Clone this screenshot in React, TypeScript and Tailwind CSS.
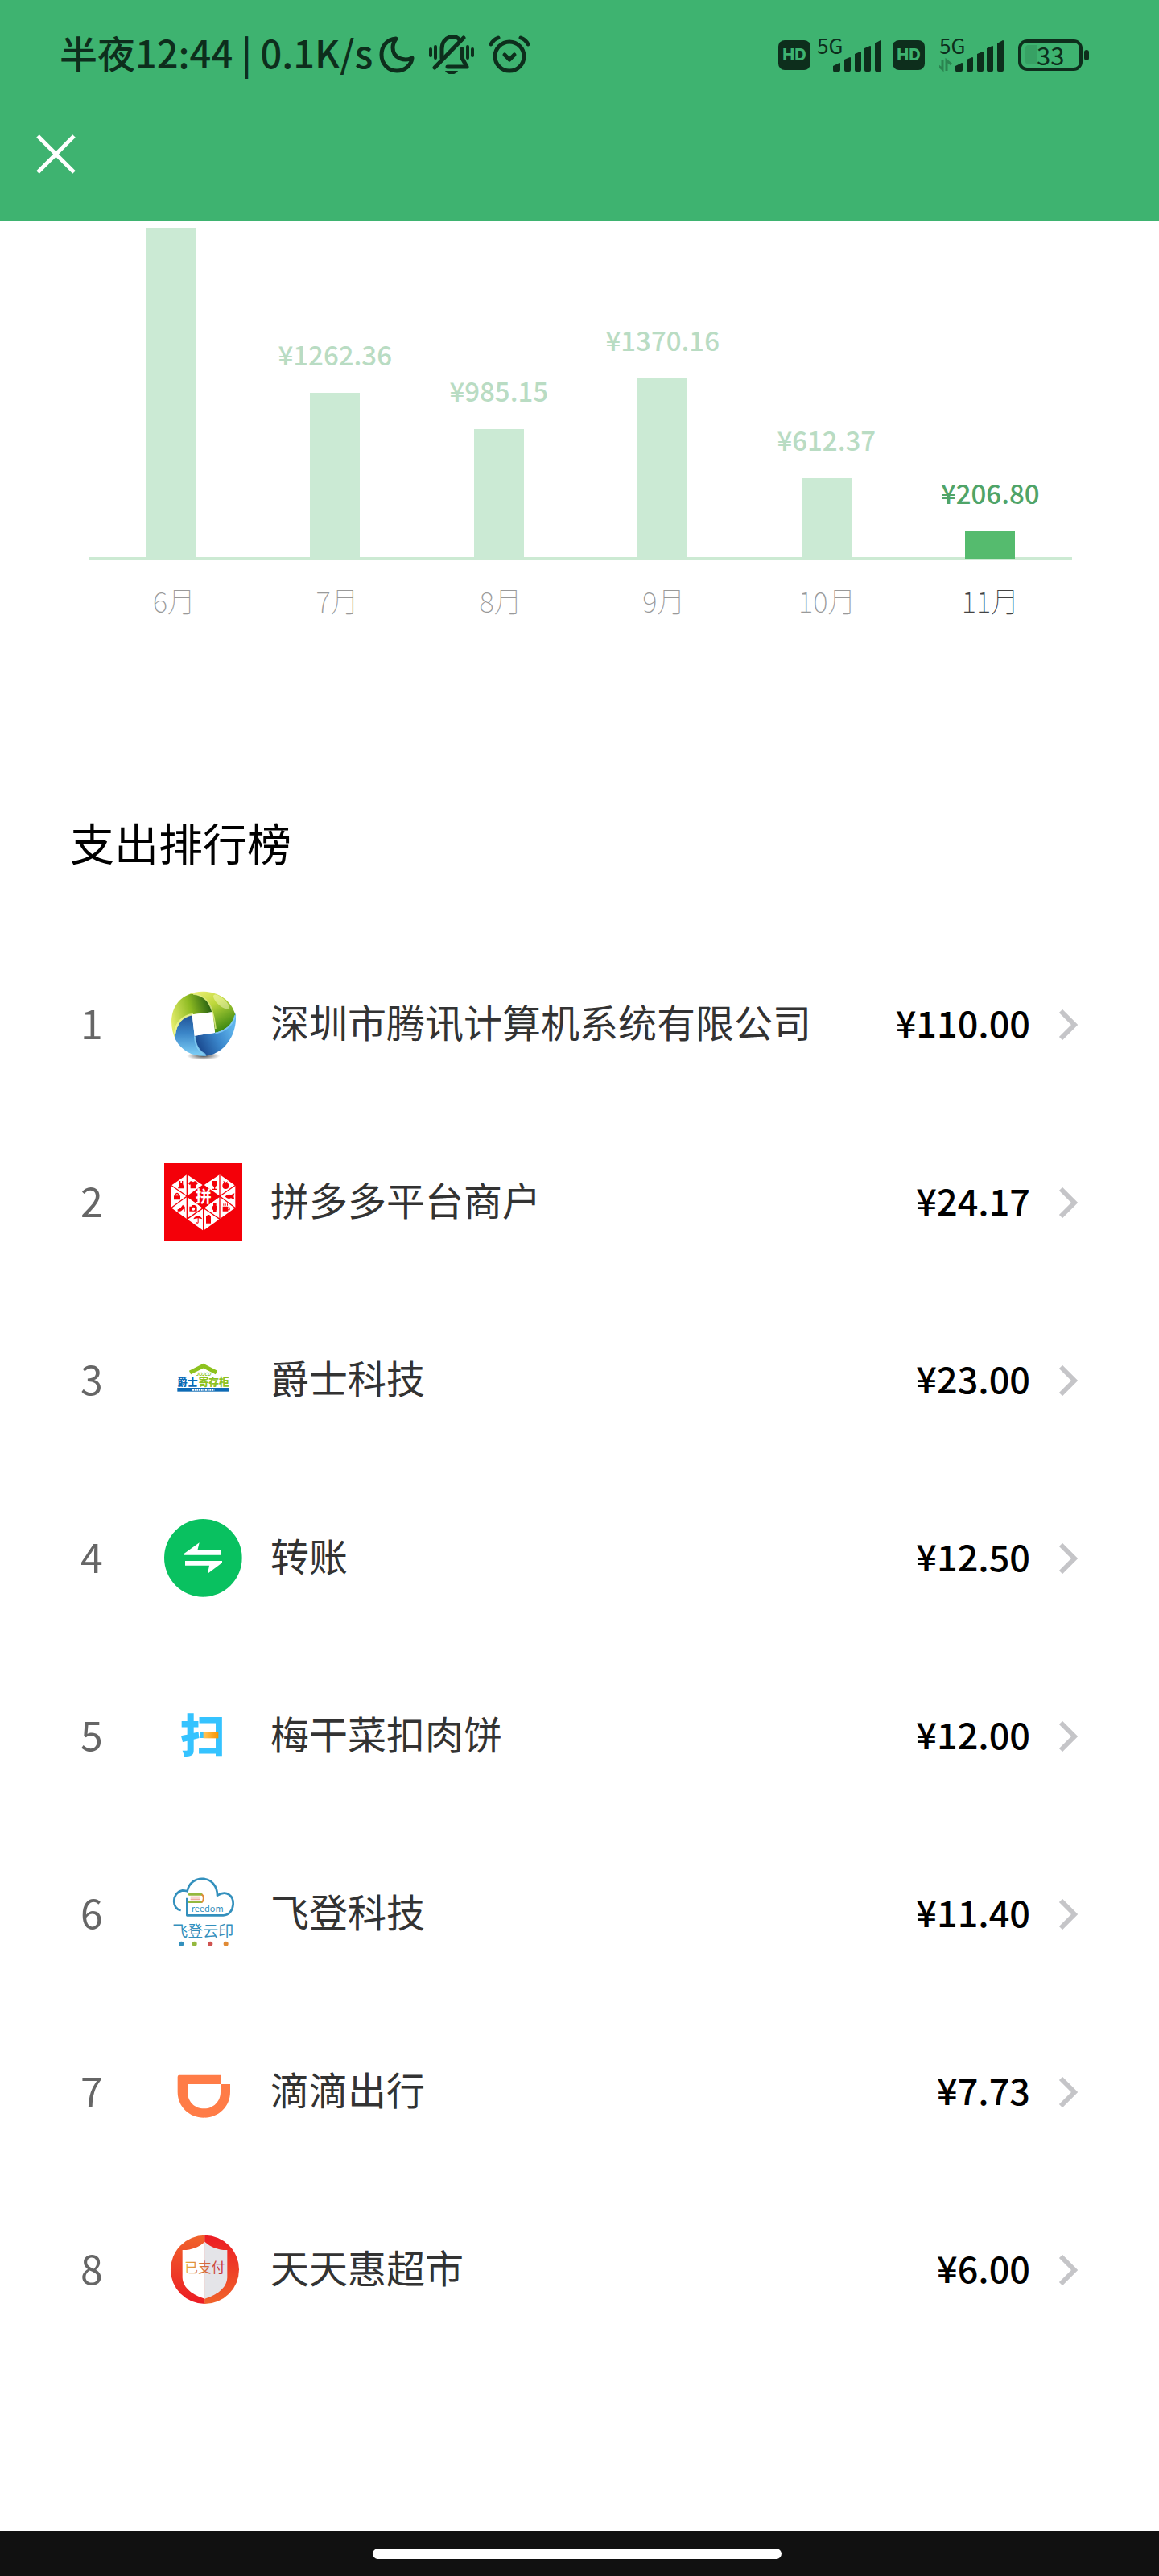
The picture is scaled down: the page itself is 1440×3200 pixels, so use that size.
import React from 'react';

interface MonthBar {
  month: string;
  amount: number;
  label?: string;
  active?: boolean;
}

interface Merchant {
  name: string;
  amount: string;
  Logo: () => React.JSX.Element;
}

const PX_PER_YUAN = 0.1632;

const MONTHS: MonthBar[] = [
  { month: '6月', amount: 2518 },
  { month: '7月', amount: 1262.36, label: '¥1262.36' },
  { month: '8月', amount: 985.15, label: '¥985.15' },
  { month: '9月', amount: 1370.16, label: '¥1370.16' },
  { month: '10月', amount: 612.37, label: '¥612.37' },
  { month: '11月', amount: 206.8, label: '¥206.80', active: true },
];

const MERCHANTS: Merchant[] = [
  { name: '深圳市腾讯计算机系统有限公司', amount: '¥110.00', Logo: TencentLogo },
  { name: '拼多多平台商户', amount: '¥24.17', Logo: PinduoduoLogo },
  { name: '爵士科技', amount: '¥23.00', Logo: LockerLogo },
  { name: '转账', amount: '¥12.50', Logo: TransferLogo },
  { name: '梅干菜扣肉饼', amount: '¥12.00', Logo: ScanLogo },
  { name: '飞登科技', amount: '¥11.40', Logo: CloudPrintLogo },
  { name: '滴滴出行', amount: '¥7.73', Logo: DidiLogo },
  { name: '天天惠超市', amount: '¥6.00', Logo: PaidShieldLogo },
];

function TencentLogo() {
  return (
    <svg viewBox="42 38 291 291" className="size-full" aria-hidden="true">
      <defs>
        <linearGradient id="tcA" x1="0" y1="0" x2="0.6" y2="1">
          <stop offset="0" stopColor="#f2f27c" />
          <stop offset="0.45" stopColor="#bfd83c" />
          <stop offset="1" stopColor="#3f8a12" />
        </linearGradient>
        <linearGradient id="tcB" x1="0.9" y1="0.3" x2="0.1" y2="0.7">
          <stop offset="0" stopColor="#5fb4ec" />
          <stop offset="0.5" stopColor="#3a86cb" />
          <stop offset="1" stopColor="#1d4f95" />
        </linearGradient>
        <linearGradient id="tcC" x1="0.4" y1="0" x2="0.4" y2="1">
          <stop offset="0" stopColor="#1f5095" />
          <stop offset="0.45" stopColor="#3b86c8" />
          <stop offset="1" stopColor="#7fd0f7" />
        </linearGradient>
        <linearGradient id="tcD" x1="0" y1="0.6" x2="1" y2="0.3">
          <stop offset="0" stopColor="#e3ec6a" />
          <stop offset="0.5" stopColor="#8ebb22" />
          <stop offset="1" stopColor="#1f5a10" />
        </linearGradient>
        <radialGradient id="tcShadow">
          <stop offset="0" stopColor="#222" stopOpacity="0.8" />
          <stop offset="1" stopColor="#222" stopOpacity="0" />
        </radialGradient>
      </defs>
      <ellipse cx="188" cy="301" rx="62" ry="15" fill="url(#tcShadow)" />
      <path d="M130 73 C190 45 285 65 308 150 C298 185 268 207 231 215 L222 138 C217 102 186 70 130 73Z" fill="url(#tcA)" />
      <path d="M308 140 C318 222 262 303 185 301 C165 283 155 258 155 226 L231 215 C268 207 300 185 308 140Z" fill="url(#tcB)" />
      <path d="M155 226 L146 147 C108 156 80 192 84 240 C108 285 150 304 200 301 C170 285 157 258 155 226Z" fill="url(#tcC)" />
      <path d="M146 147 C108 156 80 192 84 240 C52 170 73 90 140 70 C186 70 217 102 222 138Z" fill="url(#tcD)" />
      <path d="M150 71 C200 75 224 110 234 200" fill="none" stroke="#e9f08a" strokeWidth="5" opacity="0.8" />
      <path d="M81 220 C84 180 108 152 150 146" fill="none" stroke="#eef59a" strokeWidth="7" opacity="0.8" />
      <path d="M156 228 C158 262 170 284 196 296" fill="none" stroke="#8fd8fa" strokeWidth="6" opacity="0.8" />
      <path d="M232 217 C270 210 298 186 307 150" fill="none" stroke="#86cdf8" strokeWidth="6" opacity="0.8" />
      <ellipse cx="255" cy="100" rx="38" ry="14" fill="#ffffd0" opacity="0.45" transform="rotate(42 255 100)" />
      <path d="M146 147 L222 138 L231 215 L155 226Z" fill="#fff" />
    </svg>
  );
}

function PinduoduoLogo() {
  return (
    <svg viewBox="42 42 291 291" className="size-full" aria-hidden="true">
      <rect x="42" y="42" width="291" height="291" fill="#f40009" />
      <path d="M127 84 L188 125 L249 84 L307 125 V208 L188 293 L68 208 V125Z" fill="#fff" />
      <path d="M188 121 L250 165 L188 211 L126 165Z" fill="#f40009" />
      <path
        d="M127 80V252 M249 80V252 M188 208V296 M66 123L127 165L188 208L249 250 M66 210L127 165 M127 250L188 208L249 165L309 123 M249 165L309 210"
        fill="none" stroke="#f40009" strokeWidth="4"
      />
      <text x="188" y="188" textAnchor="middle" fontSize="60" fontWeight="700" fill="#fff">拼</text>
      <g fill="#f40009">
        <path d="M99 108h4v7h5v-7h4v12l5 16H93l6-16Z" />
        <path d="M140 109h5q5 5 10 0h5l8 8-6 6-3-2v15h-19v-15l-3 2-5-6Z" />
        <path d="M220 108h20c0 14-3 20-8 22v7h6v4h-16v-4h6v-7c-5-2-8-8-8-22Z" />
        <circle cx="271" cy="126" r="12" />
        <path d="M262 107l9 6 8-4-4 8h-10Z" />
        <path d="M78 163h4c0-14 16-14 16 0h4v15H78Zm7 0h10c0-8-10-8-10 0Z" />
        <path d="M269 166c8-8 15-10 22-6l13-6-3 12 3 12-13-6c-8 4-15 2-22-6Z" />
        <path d="M92 214c10-2 16-12 19-17l8 7v17h-3v-11c-5 4-9 11-14 11h-10Z" />
        <path d="M136 203h7l3-5h11l3 5h4v18h-28Zm14 3a6 6 0 1 0 1 0Z" fillRule="evenodd" />
        <path d="M225 192h11v8l4 4v9l-4 4v8h-11v-8l-4-4v-9l4-4Z" />
        <path d="M260 203h20v3h7v11h-7v4h-20Zm20 6v5h4v-5Z M262 193h3v7h-3Z M269 193h3v7h-3Z M276 193h3v7h-3Z" />
        <path d="M151 250c4-14 27-17 33 0l-14-3v15c0 6-9 6-9 0h3c0 2 3 2 3 0v-15Z" />
        <path d="M203 234h9v6h4v26h-18v-26h5Z" />
      </g>
    </svg>
  );
}

function LockerLogo() {
  return (
    <svg viewBox="42 44 291 291" className="size-full" aria-hidden="true">
      <path d="M138 161 L188 136 L237 161" fill="none" stroke="#8dc21f" strokeWidth="15" />
      <text x="188" y="174" textAnchor="middle" fontSize="17" fontWeight="700" fontStyle="italic" fill="#8dc21f">JOJCO</text>
      <text x="91" y="210" fontSize="38" fontWeight="900" fill="#0d6ab5">爵士</text>
      <text x="170" y="210" fontSize="38" fontWeight="900" fill="#8dc21f">寄存柜</text>
      <rect x="91" y="218" width="194" height="14" fill="#0d6ab5" />
      <path d="M147 226H229" stroke="#fff" strokeWidth="6" strokeDasharray="6 2" />
    </svg>
  );
}

function TransferLogo() {
  return (
    <svg viewBox="42 48 291 291" className="size-full" aria-hidden="true">
      <circle cx="187" cy="193" r="145" fill="#09c160" />
      <path d="M117 176 L173 136 L166 165 H255 V182 H117Z" fill="#fff" />
      <path d="M258 211 L204 251 L210 221 H120 V204 H258Z" fill="#fff" />
    </svg>
  );
}

function ScanLogo() {
  return (
    <svg viewBox="42 713 291 291" className="size-full" aria-hidden="true">
      <defs>
        <linearGradient id="scanBar">
          <stop offset="0" stopColor="#ffc55c" />
          <stop offset="1" stopColor="#f79400" />
        </linearGradient>
      </defs>
      <text x="185" y="917" textAnchor="middle" fontSize="168" fontWeight="900" fill="#35c3ff">扫</text>
      <rect x="188" y="845" width="56" height="22" fill="url(#scanBar)" />
    </svg>
  );
}

function CloudPrintLogo() {
  return (
    <svg viewBox="42 56 291 291" className="size-full" aria-hidden="true">
      <path
        d="M104 188 C70 185 68 122 110 114 C120 114 124 116 128 117 C140 50 240 55 240 133 C275 110 300 135 299 165 C297 190 283 207 262 207 H127 V142"
        fill="none" stroke="#3390bd" strokeWidth="8" strokeLinejoin="round"
      />
      <path d="M135 129H181 M135 157H181" stroke="#94b83e" strokeWidth="8" strokeLinecap="round" />
      <path d="M140 139H176 M140 147H176" stroke="#f0a99e" strokeWidth="5" />
      <path d="M181 129 C191 133 191 153 181 158" fill="none" stroke="#e08a35" strokeWidth="6" />
      <text x="143" y="194" fontSize="33" fill="#3390bd">reedom</text>
      <text x="187" y="287" textAnchor="middle" fontSize="57" fill="#3390bd">飞登云印</text>
      <circle cx="106" cy="313" r="9" fill="#3390bd" />
      <circle cx="155" cy="313" r="9" fill="#94b83e" />
      <circle cx="214" cy="313" r="9" fill="#cf5350" />
      <circle cx="272" cy="313" r="9" fill="#e08a35" />
    </svg>
  );
}

function DidiLogo() {
  return (
    <svg viewBox="42 30 291 291" className="size-full" aria-hidden="true">
      <path
        d="M99 113H252V147H288V176C288 230 245 272 190 272C135 272 92 230 92 176V120Q92 113 99 113ZM129 147V176C129 212 156 238 190 238C225 238 252 212 252 176V147Z"
        fill="#ff7c47" fillRule="evenodd"
      />
    </svg>
  );
}

function PaidShieldLogo() {
  return (
    <svg viewBox="42 695 291 291" className="size-full" aria-hidden="true">
      <defs>
        <linearGradient id="ringL" x2="0" y2="1">
          <stop offset="0" stopColor="#f0642b" />
          <stop offset="1" stopColor="#ec1b24" />
        </linearGradient>
        <linearGradient id="ringR" x2="0" y2="1">
          <stop offset="0" stopColor="#ec1b24" />
          <stop offset="1" stopColor="#f0642b" />
        </linearGradient>
        <linearGradient id="paidText">
          <stop offset="0" stopColor="#e9b13c" />
          <stop offset="1" stopColor="#c4283a" />
        </linearGradient>
      </defs>
      <path d="M194 712A128 128 0 0 0 194 968Z" fill="url(#ringL)" />
      <path d="M193 712A128 128 0 0 1 193 968Z" fill="url(#ringR)" />
      <path d="M194 736C172 757 140 768 110 767V870C112 910 150 936 194 949Z" fill="#fff" />
      <path d="M193 736C215 757 247 768 277 767V870C275 910 237 936 193 949Z" fill="#e4e4e8" />
      <text x="193" y="850" textAnchor="middle" fontSize="50" fill="url(#paidText)">已支付</text>
    </svg>
  );
}

function MoonIcon() {
  return (
    <svg viewBox="0 0 44 46" className="h-[46px] w-11" fill="none" stroke="currentColor" strokeWidth="5" strokeLinejoin="round" aria-hidden="true">
      <path d="M21 3C9 4 3 13 3 23C3 34 11 43 22 43C32 43 40 36 41 27C33 31 17 29 17 14C17 9 19 6 21 3Z" />
    </svg>
  );
}

function MutedBellIcon() {
  return (
    <svg viewBox="0 0 56 48" className="h-12 w-14" fill="none" stroke="currentColor" strokeWidth="5" strokeLinecap="round" aria-hidden="true">
      <path d="M16 28V17C16 0 34 -2 38 6" />
      <path d="M43 3L7 40" />
      <path d="M41 17V28L47 39H23" strokeLinejoin="round" />
      <path d="M20 44H36C33 50 23 50 20 44Z" fill="currentColor" stroke="none" />
      <path d="M2 17V25 M8 14V28 M48 14V28 M54 17V25" strokeWidth="4" />
    </svg>
  );
}

function AlarmIcon() {
  return (
    <svg viewBox="0 0 52 48" className="h-12 w-[52px]" fill="none" stroke="currentColor" strokeWidth="5" strokeLinecap="round" aria-hidden="true">
      <circle cx="26" cy="26" r="18" />
      <path d="M3 11Q6 5 12 3 M49 11Q46 5 40 3" />
      <path d="M20 24L26 30L32 24" strokeLinejoin="round" />
    </svg>
  );
}

function HdBadge() {
  return (
    <span className="flex h-[37px] w-10 items-center justify-center rounded-lg bg-[#0d2e1c] font-[Inter] text-[20px] leading-none font-extrabold text-[#3eb370]">
      HD
    </span>
  );
}

function Signal({ data }: { data?: boolean }) {
  return (
    <span className="relative h-11 w-20">
      <span className="absolute top-0 left-0 text-[26px] leading-5">5G</span>
      <svg viewBox="0 0 80 44" className="size-full" fill="currentColor" aria-hidden="true">
        <path d="M20 36L28 32Q29 32 29 33V41Q29 43 27 43H21Q20 43 20 41Z" />
        <path d="M34 28L41 25Q42 25 42 26V41Q42 43 40 43H36Q34 43 34 41Z" />
        <path d="M47 21L54 18Q55 18 55 19V41Q55 43 53 43H49Q47 43 47 41Z" />
        <path d="M59 14L66 11Q67 11 67 12V41Q67 43 65 43H61Q59 43 59 41Z" />
        <path d="M72 8L79 4Q80 4 80 5V41Q80 43 78 43H74Q72 43 72 41Z" />
        {data && <path d="M4 28V40L-2 35 M9 42V29L15 34" fill="none" stroke="#2b8450" strokeWidth="3" />}
      </svg>
    </span>
  );
}

function Battery() {
  return (
    <span className="flex items-center gap-[2px]">
      <span className="flex h-[39px] w-20 items-center rounded-[11px] border-4 border-[#0d2e1c] px-[5px]">
        <span className="h-6 w-[14px] rounded-l-sm bg-[#37a164]" />
        <span className="flex-1 pb-[2px] text-[31px] leading-none">33</span>
      </span>
      <span className="h-[13px] w-[6px] rounded-sm bg-[#0d2e1c]" />
    </span>
  );
}

function StatusBar() {
  return (
    <div className="flex h-12 items-center justify-between pr-[87px] pl-[74px] text-[#0d2e1c]">
      <div className="flex items-center">
        <span className="pb-[6px] text-[47px] leading-[48px] font-medium whitespace-pre">半夜12:44 | 0.1K/s</span>
        <div className="ml-2 flex items-center gap-[18px]">
          <MoonIcon />
          <MutedBellIcon />
          <AlarmIcon />
        </div>
      </div>
      <div className="flex items-center">
        <HdBadge />
        <span className="ml-2 flex"><Signal /></span>
        <span className="ml-[14px]"><HdBadge /></span>
        <span className="ml-[18px] flex"><Signal data /></span>
        <span className="ml-[18px]"><Battery /></span>
      </div>
    </div>
  );
}

function SpendingChart() {
  return (
    <section className="pt-[9px] pr-[108px] pl-[111px]">
      <div className="grid h-[411px] grid-cols-6 items-end">
        {MONTHS.map(m => (
          <div key={m.month} className="flex flex-col items-center">
            {m.label && (
              <span className={`mb-7 text-[33px] leading-10 font-medium ${m.active ? 'text-[#50a468]' : 'text-[#b9dcc3]'}`}>
                {m.label}
              </span>
            )}
            <div
              className={`w-[62px] ${m.active ? 'bg-[#55bb6e]' : 'bg-[#cbead4]'}`}
              style={{ height: Math.round(m.amount * PX_PER_YUAN) }}
            />
          </div>
        ))}
      </div>
      <div className="-mt-[2px] h-1 bg-[#55bb6e]/30" />
      <div className="mt-[30px] grid grid-cols-6 pl-1 text-center text-[35px] leading-10 font-thin">
        {MONTHS.map(m => (
          <span key={m.month} className={m.active ? 'text-[#444]' : 'text-[#999]'}>{m.month}</span>
        ))}
      </div>
    </section>
  );
}

function MerchantRow({ rank, merchant }: { rank: number; merchant: Merchant }) {
  const { name, amount, Logo } = merchant;
  return (
    <li>
      <button type="button" className="flex h-[221px] w-full items-center pr-[101px] pl-[100px] text-left">
        <span className="w-[104px] pb-2 text-[50px] leading-[56px] text-[#666]">{rank}</span>
        <span className="size-[97px] shrink-0"><Logo /></span>
        <span className="ml-[35px] flex-1 pb-[10px] text-[48px] leading-[56px] text-[#333]">{name}</span>
        <span className="pb-[6px] text-[45px] leading-[56px] font-medium text-black">{amount}</span>
        <svg viewBox="0 0 24 38" className="ml-[35px] h-[38px] w-6 shrink-0" fill="none" stroke="#c5c5c8" strokeWidth="6" aria-hidden="true">
          <path d="M3 2L20 19L3 36" />
        </svg>
      </button>
    </li>
  );
}

export default function App() {
  return (
    <div className="flex min-h-screen flex-col bg-white font-['Noto_Sans_CJK_SC',sans-serif]">
      <header className="bg-[#3eb370] pt-11 pb-[39px]">
        <StatusBar />
        <nav className="px-[26px] pt-14">
          <button type="button" aria-label="关闭" className="block p-[19px] text-white">
            <svg viewBox="0 0 49 49" className="size-[49px]" fill="none" stroke="currentColor" strokeWidth="5" aria-hidden="true">
              <path d="M2 2L47 47M47 2L2 47" />
            </svg>
          </button>
        </nav>
      </header>

      <main className="flex-1">
        <SpendingChart />
        <section className="pt-[251px]">
          <h2 className="px-[87px] text-[55px] leading-[56px] text-black">支出排行榜</h2>
          <ol className="pt-[89px]">
            {MERCHANTS.map((m, i) => (
              <MerchantRow key={m.name} rank={i + 1} merchant={m} />
            ))}
          </ol>
        </section>
      </main>

      <footer className="flex h-14 justify-center bg-[#111] pt-[22px] pr-[6px]">
        <div className="h-[13px] w-[508px] rounded-full bg-white" />
      </footer>
    </div>
  );
}
